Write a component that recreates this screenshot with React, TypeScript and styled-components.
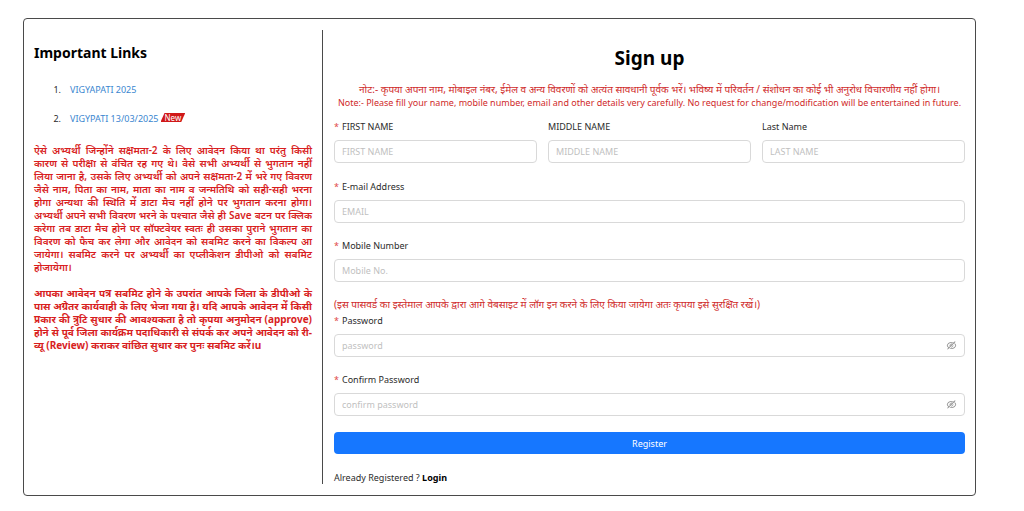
import React from "react";
import styled, { createGlobalStyle } from "styled-components";
import { AiOutlineEyeInvisible } from "react-icons/ai";

const GlobalStyle = createGlobalStyle`
  *, *::before, *::after { box-sizing: border-box; }
  body {
    margin: 0;
    background: #fff;
    color: #2b2b2b;
    font-family: "Noto Sans", "Noto Sans Devanagari", sans-serif;
    font-size: 9px;
    line-height: 13px;
  }
`;

const Card = styled.main`
  display: grid;
  grid-template-columns: minmax(0, 289fr) minmax(0, 642fr);
  margin: 18px 48px 15px 23px;
  padding: 11px 10px;
  border: 1px solid #4a4a4a;
  border-radius: 4px;
`;

const LinksPanel = styled.aside`
  padding-right: 10px;
  border-right: 1px solid #4a4a4a;
`;

const LinksTitle = styled.h2`
  margin: 13px 0 19px;
  color: #000;
  font-size: 14px;
  line-height: 20px;
`;

const LinkList = styled.ol`
  margin: 0 0 17px;
  padding-left: 36px;
`;

const LinkItem = styled.li`
  line-height: 16px;
  & + & { margin-top: 13px; }
  &::marker { content: counter(list-item) ".\\2003"; }
`;

const DocumentLink = styled.a`
  color: #3a86d0;
  text-decoration: none;
`;

const NewBadge = styled.span`
  display: inline-block;
  margin-left: 2px;
  padding: 0 4px;
  background: #d01818;
  clip-path: polygon(4px 0, 100% 0, calc(100% - 4px) 100%, 0 100%);
  color: #fff;
  font-size: 8px;
  line-height: 9px;
  vertical-align: 1px;
`;

const Notice = styled.p<{ $weight: number }>`
  margin: 0 0 13px;
  color: #d81e1e;
  font-size: 10px;
  font-weight: ${(p) => p.$weight};
  text-align: justify;
`;

const FormPanel = styled.form`
  display: flex;
  flex-direction: column;
  padding-left: 11px;
`;

const Title = styled.h1`
  margin: 14px 0 11px;
  color: #000;
  font-size: 19px;
  line-height: 28px;
  text-align: center;
`;

const Warning = styled.p<{ $centered?: boolean }>`
  margin: ${(p) => (p.$centered ? "0" : "3px 0 0")};
  color: #cf2a2a;
  text-align: ${(p) => (p.$centered ? "center" : "left")};
  &:lang(hi) { font-size: 10px; }
`;

const NameRow = styled.div`
  display: grid;
  grid-template-columns: repeat(3, minmax(0, 1fr));
  gap: 11px;
  margin: 8px 0 1px;
`;

const FieldBox = styled.div`
  display: flex;
  flex-direction: column;
  margin-bottom: 13px;
`;

const Label = styled.label<{ $required?: boolean }>`
  margin-bottom: 4px;
  line-height: 19px;
  &::before {
    content: ${(p) => (p.$required ? '"*"' : "none")};
    margin-right: 3px;
    color: #e0484a;
  }
`;

const InputFrame = styled.div`
  display: flex;
  align-items: center;
  height: 23px;
  padding: 0 7px;
  border: 1px solid #d9d9d9;
  border-radius: 4px;
`;

const TextInput = styled.input`
  flex: 1;
  min-width: 0;
  padding: 0;
  border: 0;
  outline: 0;
  background: none;
  font: inherit;
  &::placeholder { color: #bfbfbf; }
`;

const RevealButton = styled.button`
  display: flex;
  padding: 0;
  border: 0;
  background: none;
  color: #8c8c8c;
  font-size: 11px;
`;

const RegisterButton = styled.button`
  height: 22px;
  margin-top: 3px;
  border: 0;
  border-radius: 4px;
  background: #1677ff;
  color: #fff;
  font: inherit;
`;

const LoginPrompt = styled.p`
  margin: 17px 0 0;
`;

const LoginLink = styled.a`
  color: #000;
  font-weight: 700;
  text-decoration: none;
`;

type FieldProps = {
  id: string;
  label: string;
  placeholder: string;
  type?: string;
  required?: boolean;
};

function Field({ id, label, placeholder, type = "text", required }: FieldProps) {
  return (
    <FieldBox>
      <Label htmlFor={id} $required={required}>{label}</Label>
      <InputFrame>
        <TextInput id={id} type={type} placeholder={placeholder} />
        {type === "password" && (
          <RevealButton type="button" aria-label="Show password">
            <AiOutlineEyeInvisible />
          </RevealButton>
        )}
      </InputFrame>
    </FieldBox>
  );
}

export default function App() {
  return (
    <>
      <GlobalStyle />
      <Card>
        <LinksPanel>
          <LinksTitle>Important Links</LinksTitle>
          <LinkList>
            <LinkItem><DocumentLink href="#">VIGYAPATI 2025</DocumentLink></LinkItem>
            <LinkItem>
              <DocumentLink href="#">VIGYPATI 13/03/2025</DocumentLink>
              <NewBadge>New</NewBadge>
            </LinkItem>
          </LinkList>
          <Notice lang="hi" $weight={600}>
            ऐसे अभ्यर्थी जिन्होंने सक्षमता-2 के लिए आवेदन किया था परंतु किसी कारण से परीक्षा से वंचित रह गए थे। वैसे सभी अभ्यर्थी से भुगतान नहीं लिया जाना है, उसके लिए अभ्यर्थी को अपने सक्षमता-2 में भरे गए विवरण जैसे नाम, पिता का नाम, माता का नाम व जन्मतिथि को सही-सही भरना होगा अन्यथा की स्थिति में डाटा मैच नहीं होने पर भुगतान करना होगा। अभ्यर्थी अपने सभी विवरण भरने के पश्चात जैसे ही Save बटन पर क्लिक करेगा तब डाटा मैच होने पर सॉफ्टवेयर स्वतः ही उसका पुराने भुगतान का विवरण को फैच कर लेगा और आवेदन को सबमिट करने का विकल्प आ जायेगा। सबमिट करने पर अभ्यर्थी का एप्लीकेशन डीपीओ को सबमिट होजायेगा।
          </Notice>
          <Notice lang="hi" $weight={700}>
            आपका आवेदन पत्र सबमिट होने के उपरांत आपके जिला के डीपीओ के पास अग्रेतर कार्यवाही के लिए भेजा गया है। यदि आपके आवेदन में किसी प्रकार की त्रुटि सुधार की आवश्यकता है तो कृपया अनुमोदन (approve) होने से पूर्व जिला कार्यक्रम पदाधिकारी से संपर्क कर अपने आवेदन को री-व्यू (Review) कराकर वांछित सुधार कर पुनः सबमिट करें।u
          </Notice>
        </LinksPanel>
        <FormPanel>
          <Title>Sign up</Title>
          <Warning lang="hi" $centered>
            नोट:- कृपया अपना नाम, मोबाइल नंबर, ईमेल व अन्य विवरणों को अत्यंत सावधानी पूर्वक भरें। भविष्य में परिवर्तन / संशोधन का कोई भी अनुरोध विचारणीय नहीं होगा।
          </Warning>
          <Warning $centered>
            Note:- Please fill your name, mobile number, email and other details very carefully. No request for change/modification will be entertained in future.
          </Warning>
          <NameRow>
            <Field id="first-name" label="FIRST NAME" placeholder="FIRST NAME" required />
            <Field id="middle-name" label="MIDDLE NAME" placeholder="MIDDLE NAME" />
            <Field id="last-name" label="Last Name" placeholder="LAST NAME" />
          </NameRow>
          <Field id="email" label="E-mail Address" placeholder="EMAIL" required />
          <Field id="mobile" label="Mobile Number" placeholder="Mobile No." required />
          <Warning lang="hi">
            (इस पासवर्ड का इस्तेमाल आपके द्वारा आगे वेबसाइट में लॉग इन करने के लिए किया जायेगा अतः कृपया इसे सुरक्षित रखें।)
          </Warning>
          <Field id="password" label="Password" placeholder="password" type="password" required />
          <Field id="confirm" label="Confirm Password" placeholder="confirm password" type="password" required />
          <RegisterButton type="button">Register</RegisterButton>
          <LoginPrompt>
            Already Registered ? <LoginLink href="#">Login</LoginLink>
          </LoginPrompt>
        </FormPanel>
      </Card>
    </>
  );
}
